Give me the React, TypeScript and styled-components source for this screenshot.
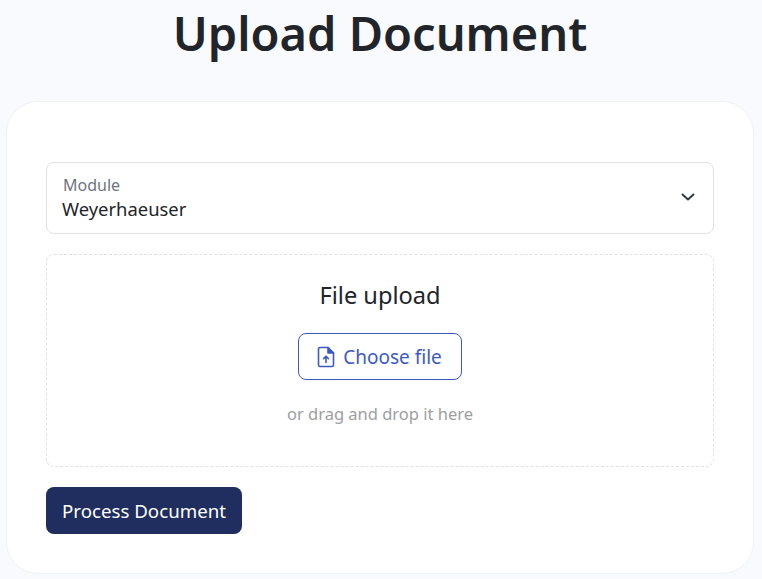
import React from "react";
import styled, { createGlobalStyle } from "styled-components";

const Global = createGlobalStyle`
  html, body { margin: 0; padding: 0; background: #f9fafe; }
  body { font-family: "Noto Sans", "Open Sans", sans-serif; color: #212529; }
`;

const Page = styled.div`
  width: 762px;
  height: 579px;
  overflow: hidden;
  padding: 0 8px 0 6px;
  box-sizing: border-box;
`;

const Title = styled.h1`
  margin: 0;
  height: 101px;
  padding-top: 1px;
  box-sizing: border-box;
  text-align: center;
  font-size: 47px;
  line-height: 64px;
  font-weight: 600;
  color: #212529;
`;

const Card = styled.section`
  height: 473px;
  box-sizing: border-box;
  background: #fff;
  border: 1px solid #f1f2f6;
  border-radius: 32px;
  padding: 60px 39px 39px;
  display: flex;
  flex-direction: column;
  align-items: stretch;
  gap: 20px;
`;

const SelectBox = styled.div`
  height: 72px;
  box-sizing: border-box;
  border: 1px solid #dee2e6;
  border-radius: 8px;
  padding: 12px 16px 0;
  display: flex;
  justify-content: space-between;
`;

const SelectText = styled.div`
  display: flex;
  flex-direction: column;
`;

const SelectLabel = styled.span`
  font-size: 16px;
  line-height: 21px;
  color: #6c757d;
`;

const SelectValue = styled.span`
  font-size: 18.4px;
  line-height: 25px;
  color: #212529;
  margin-left: -1px;
`;

const Chevron = styled.svg`
  width: 16px;
  height: 16px;
  margin: 14px 1px 0 0;
  fill: none;
  stroke: #343a40;
  stroke-width: 2;
  stroke-linecap: round;
  stroke-linejoin: round;
`;

const DropZone = styled.div`
  height: 213px;
  box-sizing: border-box;
  border: 1px dashed #dee2e6;
  border-radius: 8px;
  padding-top: 22px;
  display: flex;
  flex-direction: column;
  align-items: center;
`;

const DropTitle = styled.h2`
  margin: 0;
  font-size: 23.6px;
  line-height: 36px;
  font-weight: 400;
  color: #212529;
`;

const ChooseButton = styled.button`
  margin-top: 20px;
  width: 164px;
  height: 47px;
  box-sizing: border-box;
  background: #fff;
  border: 1px solid #3d5ac0;
  border-radius: 8px;
  color: #3d5ac0;
  font-family: inherit;
  font-size: 19px;
  display: flex;
  align-items: center;
  justify-content: center;
  gap: 8px;
  padding: 0 1px 0 0;
`;

const FileIcon = styled.svg`
  width: 18px;
  height: 22px;
  fill: none;
  stroke: #3d5ac0;
  stroke-width: 1.6;
  stroke-linecap: round;
  stroke-linejoin: round;
`;

const FileCorner = styled.path`
  fill: #3d5ac0;
`;

const DropHint = styled.p`
  margin: 22px 0 0;
  font-size: 16.5px;
  line-height: 24px;
  color: #9c9ea2;
`;

const SubmitButton = styled.button`
  align-self: flex-start;
  width: 196px;
  height: 47px;
  box-sizing: border-box;
  background: #1f2e5f;
  border: none;
  border-radius: 8px;
  color: #fff;
  font-family: inherit;
  font-size: 18.7px;
  padding: 0;
`;

export default function App() {
  return (
    <Page>
      <Global />
      <Title>Upload Document</Title>
      <Card>
        <SelectBox>
          <SelectText>
            <SelectLabel>Module</SelectLabel>
            <SelectValue>Weyerhaeuser</SelectValue>
          </SelectText>
          <Chevron viewBox="0 0 16 16">
            <path d="M2.5 5.5 8 10.5l5.5-5" />
          </Chevron>
        </SelectBox>
        <DropZone>
          <DropTitle>File upload</DropTitle>
          <ChooseButton type="button">
            <FileIcon viewBox="0 0 18 22">
              <path d="M11 1.5H3A1.5 1.5 0 0 0 1.5 3v16A1.5 1.5 0 0 0 3 20.5h12a1.5 1.5 0 0 0 1.5-1.5V7z" />
              <FileCorner d="M11 1.5 16.5 7H11z" />
              <path d="M9 16.5v-6M6.6 12.6 9 10.2l2.4 2.4" />
            </FileIcon>
            Choose file
          </ChooseButton>
          <DropHint>or drag and drop it here</DropHint>
        </DropZone>
        <SubmitButton type="button">Process Document</SubmitButton>
      </Card>
    </Page>
  );
}
